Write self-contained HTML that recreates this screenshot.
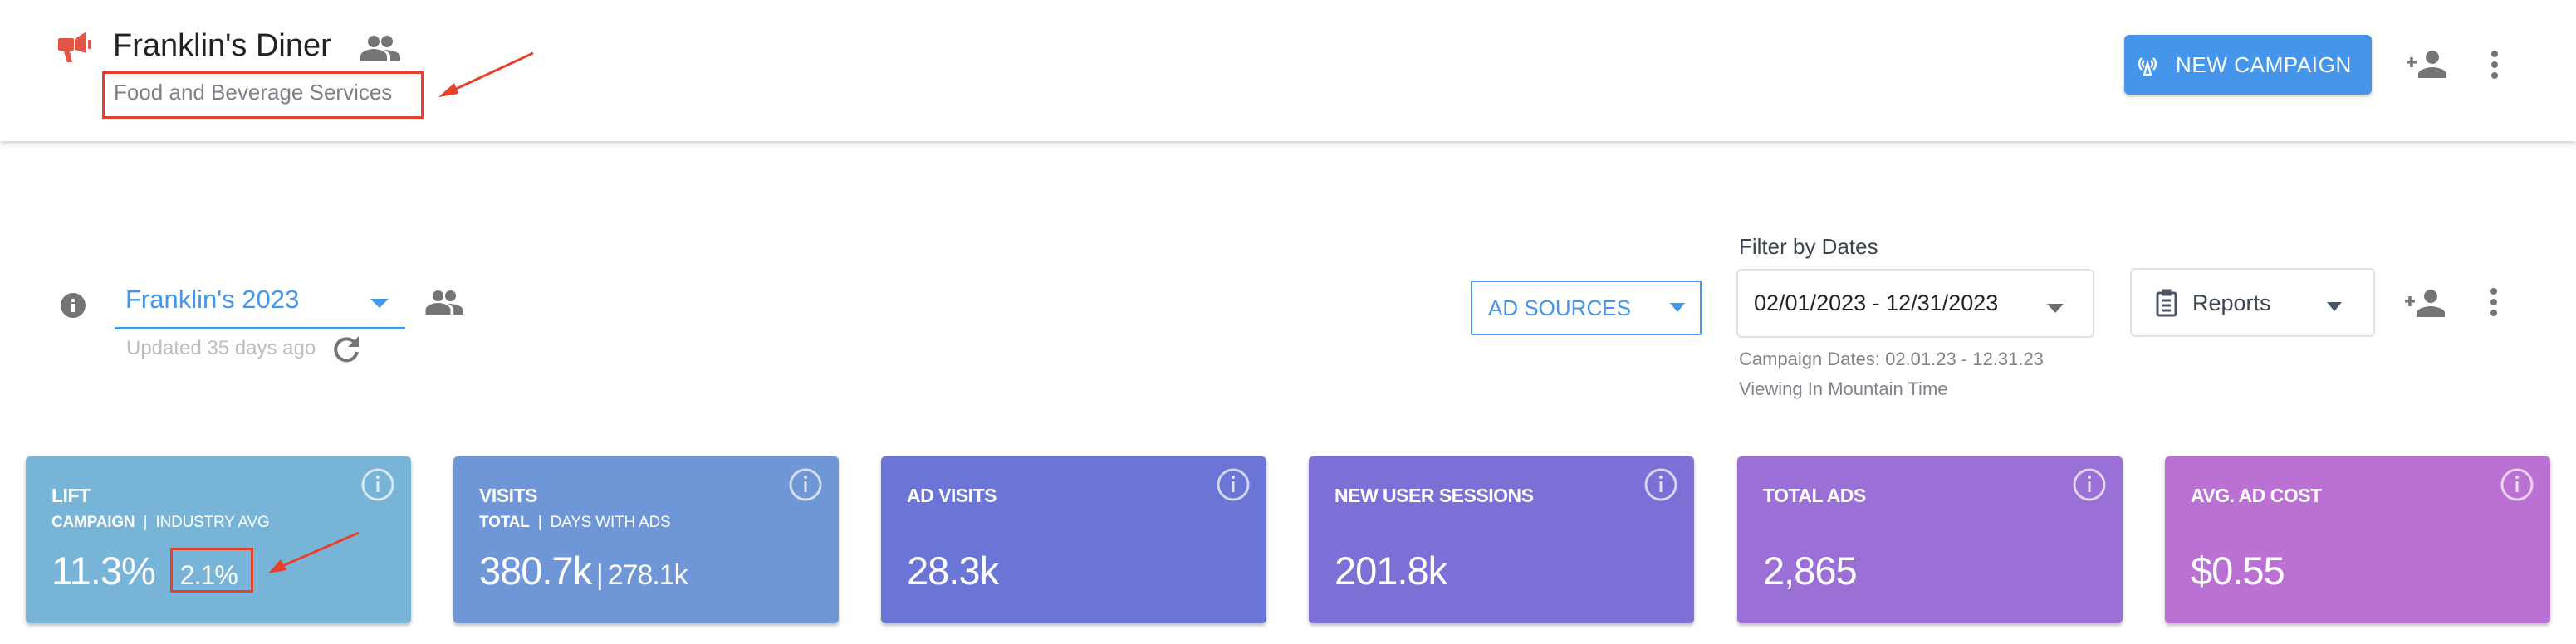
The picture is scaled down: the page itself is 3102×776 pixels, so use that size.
<!DOCTYPE html>
<html><head><meta charset="utf-8"><style>
*{margin:0;padding:0;box-sizing:border-box}
body{width:3102px;height:776px;background:#fff;font-family:"Liberation Sans",sans-serif;position:relative;overflow:hidden}
.abs{position:absolute}
.hdr{left:0;top:0;width:3102px;height:170px;background:#fff;box-shadow:0 3px 6px rgba(0,0,0,.18)}
.card{position:absolute;top:550px;width:464px;height:201px;border-radius:5px;box-shadow:0 3px 4px rgba(0,0,0,.25);color:#fff}
.card .t{position:absolute;left:31px;top:34px;font-size:23px;font-weight:bold;letter-spacing:-0.5px}
.card .s{position:absolute;left:31px;top:69px;font-size:19px;letter-spacing:-0.2px}
.card .v{position:absolute;left:31px;top:110px;font-size:47px;letter-spacing:-1px}
.card svg{position:absolute;right:20px;top:14px}
</style></head><body>
<div class="abs hdr"></div>
<svg class="abs" style="left:68px;top:36px" width="44" height="42" viewBox="68 36 44 42">
<rect x="70" y="46" width="19" height="15" rx="2" fill="#e25544"/>
<path d="M90 47 L104 38 L104 64 L90 60 Z" fill="#e25544"/>
<rect x="106" y="48" width="4" height="11" rx="1" fill="#e25544"/>
<path d="M77 62 L84 62 L87 75 L81 75 Z" fill="#e25544"/>
</svg>
<div class="abs" style="left:136px;top:34px;font-size:38px;color:#222">Franklin's Diner</div>
<svg class="abs" style="left:434px;top:42px" width="48" height="32" viewBox="0 0 24 16"><circle cx="8" cy="4" r="3.5" fill="#757575"/><circle cx="16" cy="4" r="3.5" fill="#757575"/><path d="M0 16v-3c0-3 5-4.5 8-4.5s8 1.5 8 4.5v3zM14 9c3 0 10 1 10 4v3h-6v-3c0-1.5-1-3-4-4z" fill="#757575"/></svg>
<div class="abs" style="left:123px;top:86px;width:387px;height:57px;border:3px solid #e8412a"></div>
<div class="abs" style="left:137px;top:96px;font-size:26px;color:#7b8089">Food and Beverage Services</div>
<svg class="abs" style="left:0;top:0" width="700" height="180"><line x1="642" y1="64" x2="545" y2="109" stroke="#e8412a" stroke-width="3"/><path d="M528 117 L547 100 L552 113 Z" fill="#e8412a"/></svg>
<div class="abs" style="left:2558px;top:42px;width:298px;height:72px;background:#4596ea;border-radius:6px;box-shadow:0 2px 4px rgba(0,0,0,.25);color:#fff;font-size:26px;letter-spacing:0.6px;line-height:72px;padding-left:62px">NEW CAMPAIGN</div>
<svg class="abs" style="left:2570px;top:62px" width="32" height="32" viewBox="0 0 32 32" fill="none" stroke="#fff" stroke-width="2.5"><path d="M9 8a10 10 0 0 0 0 14M23 8a10 10 0 0 1 0 14M12 11a5 5 0 0 0 0 8M20 11a5 5 0 0 1 0 8"/><path d="M16 14 L12 28 L20 28 Z"/></svg>
<svg class="abs" style="left:2898px;top:60px" width="48" height="34" viewBox="0 0 48 34" fill="#757575"><rect x="0" y="13" width="12" height="3.5"/><rect x="4.2" y="9" width="3.5" height="12"/><circle cx="31" cy="9" r="8"/><path d="M14 34v-5c0-5 11-8 17-8s17 3 17 8v5z"/></svg>
<svg class="abs" style="left:2998px;top:60px" width="12" height="36"><circle cx="6" cy="5" r="4" fill="#757575"/><circle cx="6" cy="18" r="4" fill="#757575"/><circle cx="6" cy="31" r="4" fill="#757575"/></svg>

<svg class="abs" style="left:73px;top:353px" width="30" height="30" viewBox="0 0 30 30"><circle cx="15" cy="15" r="15" fill="#757575"/><rect x="13" y="13" width="4" height="10" fill="#fff"/><circle cx="15" cy="9" r="2.2" fill="#fff"/></svg>
<div class="abs" style="left:151px;top:343px;font-size:31px;color:#4596ea">Franklin's 2023</div>
<svg class="abs" style="left:446px;top:360px" width="22" height="12"><path d="M0 0h22L11 11z" fill="#4596ea"/></svg>
<div class="abs" style="left:138px;top:394px;width:350px;height:3px;background:#4596ea"></div>
<svg class="abs" style="left:512px;top:349px" width="46" height="30" viewBox="0 0 24 16"><circle cx="8" cy="4" r="3.5" fill="#757575"/><circle cx="16" cy="4" r="3.5" fill="#757575"/><path d="M0 16v-3c0-3 5-4.5 8-4.5s8 1.5 8 4.5v3zM14 9c3 0 10 1 10 4v3h-6v-3c0-1.5-1-3-4-4z" fill="#757575"/></svg>
<div class="abs" style="left:152px;top:406px;font-size:24px;color:#bdbdbd">Updated 35 days ago</div>
<svg class="abs" style="left:400px;top:402px" width="36" height="36" viewBox="0 0 36 36" fill="none"><path d="M28 12A13 13 0 1 0 30 22" stroke="#757575" stroke-width="4"/><path d="M32 3V16H19Z" fill="#757575"/></svg>

<div class="abs" style="left:1771px;top:338px;width:278px;height:66px;border:2px solid #4596ea;border-radius:2px"></div>
<div class="abs" style="left:1792px;top:356px;font-size:26px;color:#4596ea">AD SOURCES</div>
<svg class="abs" style="left:2011px;top:365px" width="18" height="12"><path d="M0 0h18L9 11z" fill="#4596ea"/></svg>
<div class="abs" style="left:2094px;top:282px;font-size:26px;color:#3d4451">Filter by Dates</div>
<div class="abs" style="left:2091px;top:324px;width:431px;height:83px;border:2px solid #dde2ea;border-radius:6px"></div>
<div class="abs" style="left:2112px;top:350px;font-size:27px;color:#222">02/01/2023 - 12/31/2023</div>
<svg class="abs" style="left:2465px;top:366px" width="20" height="12"><path d="M0 0h20L10 11z" fill="#6c6c6c"/></svg>
<div class="abs" style="left:2094px;top:420px;font-size:22px;color:#80858c">Campaign Dates: 02.01.23 - 12.31.23</div>
<div class="abs" style="left:2094px;top:456px;font-size:22px;color:#80858c">Viewing In Mountain Time</div>
<div class="abs" style="left:2565px;top:323px;width:295px;height:83px;border:2px solid #dde2ea;border-radius:6px"></div>
<svg class="abs" style="left:2595px;top:348px" width="28" height="34" viewBox="0 0 28 34" fill="none" stroke="#4a5468" stroke-width="3"><rect x="3" y="5" width="22" height="27" rx="2"/><rect x="10" y="2" width="8" height="5" fill="#4a5468"/><path d="M9 14h10M9 20h10M9 26h10"/></svg>
<div class="abs" style="left:2640px;top:350px;font-size:27px;color:#3d4451">Reports</div>
<svg class="abs" style="left:2802px;top:364px" width="18" height="12"><path d="M0 0h18L9 11z" fill="#4a5468"/></svg>
<svg class="abs" style="left:2896px;top:348px" width="48" height="34" viewBox="0 0 48 34" fill="#757575"><rect x="0" y="13" width="12" height="3.5"/><rect x="4.2" y="9" width="3.5" height="12"/><circle cx="31" cy="9" r="8"/><path d="M14 34v-5c0-5 11-8 17-8s17 3 17 8v5z"/></svg>
<svg class="abs" style="left:2997px;top:346px" width="12" height="36"><circle cx="6" cy="5" r="4" fill="#757575"/><circle cx="6" cy="18" r="4" fill="#757575"/><circle cx="6" cy="31" r="4" fill="#757575"/></svg>

<div class="card" style="left:31px;background:#78b4d8"><div class="t">LIFT</div><div class="s"><b>CAMPAIGN</b> &nbsp;|&nbsp; INDUSTRY AVG</div><div class="v">11.3%<span style="font-size:32px;margin-left:30px">2.1%</span></div><svg width="40" height="40"><circle cx="20" cy="20" r="18" fill="none" stroke="rgba(255,255,255,.7)" stroke-width="3"/><rect x="18.5" y="16" width="3" height="13" fill="rgba(255,255,255,.8)"/><circle cx="20" cy="11" r="2" fill="rgba(255,255,255,.8)"/></svg></div>
<div class="abs" style="left:205px;top:660px;width:100px;height:54px;border:3px solid #e8412a"></div>
<svg class="abs" style="left:300px;top:630px" width="150" height="70"><line x1="132" y1="12" x2="40" y2="52" stroke="#e8412a" stroke-width="3"/><path d="M23 61 L38 44 L45 57 Z" fill="#e8412a"/></svg>

<div class="card" style="left:546px;background:#6f96d6"><div class="t">VISITS</div><div class="s"><b>TOTAL</b> &nbsp;|&nbsp; DAYS WITH ADS</div><div class="v">380.7k<span style="font-size:34px">&thinsp;|&thinsp;278.1k</span></div><svg width="40" height="40"><circle cx="20" cy="20" r="18" fill="none" stroke="rgba(255,255,255,.7)" stroke-width="3"/><rect x="18.5" y="16" width="3" height="13" fill="rgba(255,255,255,.8)"/><circle cx="20" cy="11" r="2" fill="rgba(255,255,255,.8)"/></svg></div>
<div class="card" style="left:1061px;background:#6a75d5"><div class="t">AD VISITS</div><div class="v">28.3k</div><svg width="40" height="40"><circle cx="20" cy="20" r="18" fill="none" stroke="rgba(255,255,255,.7)" stroke-width="3"/><rect x="18.5" y="16" width="3" height="13" fill="rgba(255,255,255,.8)"/><circle cx="20" cy="11" r="2" fill="rgba(255,255,255,.8)"/></svg></div>
<div class="card" style="left:1576px;background:#7c6fd5"><div class="t">NEW USER SESSIONS</div><div class="v">201.8k</div><svg width="40" height="40"><circle cx="20" cy="20" r="18" fill="none" stroke="rgba(255,255,255,.7)" stroke-width="3"/><rect x="18.5" y="16" width="3" height="13" fill="rgba(255,255,255,.8)"/><circle cx="20" cy="11" r="2" fill="rgba(255,255,255,.8)"/></svg></div>
<div class="card" style="left:2092px;background:#9b70d6"><div class="t">TOTAL ADS</div><div class="v">2,865</div><svg width="40" height="40"><circle cx="20" cy="20" r="18" fill="none" stroke="rgba(255,255,255,.7)" stroke-width="3"/><rect x="18.5" y="16" width="3" height="13" fill="rgba(255,255,255,.8)"/><circle cx="20" cy="11" r="2" fill="rgba(255,255,255,.8)"/></svg></div>
<div class="card" style="left:2607px;background:#bb71d4"><div class="t">AVG. AD COST</div><div class="v">$0.55</div><svg width="40" height="40"><circle cx="20" cy="20" r="18" fill="none" stroke="rgba(255,255,255,.7)" stroke-width="3"/><rect x="18.5" y="16" width="3" height="13" fill="rgba(255,255,255,.8)"/><circle cx="20" cy="11" r="2" fill="rgba(255,255,255,.8)"/></svg></div>
</body></html>
